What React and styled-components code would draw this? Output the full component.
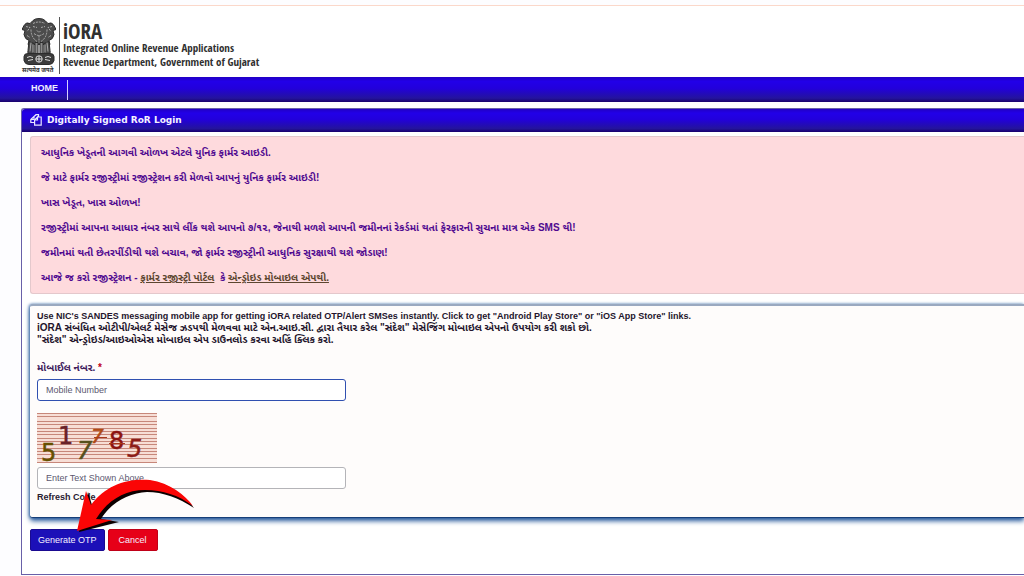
import React from "react";
import styled, { createGlobalStyle, css } from "styled-components";

const GlobalStyle = createGlobalStyle`
  * {
    box-sizing: border-box;
  }

  body {
    margin: 0;
    background: #fdfdff;
    font-family: "Liberation Sans", "Noto Sans Gujarati", "Noto Sans", sans-serif;
    overflow-x: hidden;
  }
`;

const notices = [
  "આધુનિક ખેડૂતની આગવી ઓળખ એટલે યુનિક ફાર્મર આઇડી.",
  "જે માટે ફાર્મર રજીસ્ટ્રીમાં રજીસ્ટ્રેશન કરી મેળવો આપનું યુનિક ફાર્મર આઇડી!",
  "ખાસ ખેડૂત, ખાસ ઓળખ!",
  "રજીસ્ટ્રીમાં આપના આધાર નંબર સાથે લીંક થશે આપનો ૭/૧૨, જેનાથી મળશે આપની જમીનનાં રેકર્ડમાં થતાં ફેરફારની સુચના માત્ર એક SMS થી!",
  "જમીનમાં થતી છેતરપીંડીથી થશે બચાવ, જો ફાર્મર રજીસ્ટ્રીની આધુનિક સુરક્ષાથી થશે જોડાણ!",
];

const captchaLines = [1, 4, 9, 12, 16, 19, 22, 26, 29, 32, 36, 39, 42, 46, 50];

function Emblem() {
  return (
    <EmblemSvg viewBox="0 0 34 48" aria-hidden="true">
      <g fill="#4c4c4c" stroke="#2c2c2c" strokeWidth="1">
        <path d="M11 3 Q13 1 17 1 Q21 1 23 3 L26 6 Q30 4 32 8 L34 12 L31 13 L32 17 Q31 22 27 23 L28 27 L6 27 L7 23 Q3 22 2 17 L3 13 L0 12 L2 8 Q4 4 8 6Z" />
        <path d="M7 24 L6 33 Q5 37 9 37 H12 L12 26Z M27 24 L28 33 Q29 37 25 37 H22 L22 26Z" />
        <path d="M13 25 L13 37 L16 37 L16 25Z M18 25 L18 37 L21 37 L21 25Z" fill="#8c8c8c" />
        <path d="M2 39 Q2 36 6 36 H28 Q32 36 32 39 V43 Q31 47 27 47 H7 Q3 47 2 43Z" fill="#3c3c3c" />
      </g>
      <g fill="none" stroke="#c4c4c4" strokeWidth="0.8">
        <path
          d="M11 6 Q17 3 23 6 M11 9 L15 10 M19 10 L23 9 M15 13 L17 15 L19 13 M12 16 Q17 20 22 16 M9 12 Q9 20 15 24 M25 12 Q25 20 19 24 M17 18 V25 M4 9 L8 10 L5 14 M30 9 L26 10 L29 14 M5 18 L8 20 M29 18 L26 20"
          strokeDasharray="2 1"
        />
        <path d="M9 25 L8 34 M11 27 L11 35 M25 25 L26 34 M23 27 L23 35" />
      </g>
      <g fill="none" stroke="#dcdcdc" strokeWidth="1">
        <circle cx="17" cy="41.5" r="3.2" />
        <path d="M14 41.5 H20 M17 38.5 V44.5 M5 40 Q8 38 11 40 M6 43 L11 42 M23 40 Q26 38 29 40 M23 42 L28 43" />
      </g>
    </EmblemSvg>
  );
}

function Captcha() {
  return (
    <CaptchaSvg viewBox="0 0 120 50" role="img" aria-label="Captcha">
      <rect width="120" height="50" fill="#f7ded6" />
      {captchaLines.map((y) => (
        <path key={y} d={`M0 ${y - 0.5}H120`} stroke="#b86a5c" strokeWidth="1" opacity="0.75" />
      ))}
      <g fontFamily="DejaVu Sans, sans-serif" strokeWidth="0.5">
        <text x="4" y="48" fill="#665000" stroke="#665000" fontSize="24">5</text>
        <text x="21" y="31" fill="#682228" stroke="#682228" fontSize="24">1</text>
        <text x="40" y="46" fill="#56501c" stroke="#56501c" fontSize="24" fontStyle="italic">7</text>
        <text x="54" y="30" fill="#b04a14" stroke="#b04a14" fontSize="20" fontStyle="italic">7</text>
        <text x="72" y="36" fill="#8c1410" stroke="#8c1410" fontSize="24">8</text>
        <text x="90" y="44" fill="#8c1c18" stroke="#8c1c18" fontSize="24" fontStyle="italic">5</text>
      </g>
      <path d="M57 24.5H70 M72 30.5H88" stroke="#a8381c" strokeWidth="1" />
    </CaptchaSvg>
  );
}

function Arrow() {
  return (
    <ArrowSvg viewBox="0 0 118 56" aria-hidden="true">
      <path
        d="M2 54 L11 14 L15 27 C30 8 52 1 74 3 C94 6 108 18 117 30 C102 20 86 14 70 14 C53 15 34 24 24 41 L42 44 Z"
        fill="#0c0000"
      />
      <path
        d="M0 53 L9 13 L14 27 C29 7 50 0 73 2 C93 5 108 17 116 28 C101 17 86 12 68 12 C47 12 30 23 19 41 L35 42 Z"
        fill="#fb0505"
      />
    </ArrowSvg>
  );
}

function App() {
  return (
    <Page>
      <GlobalStyle />
      <Header>
        <EmblemBox>
          <Emblem />
          <Motto>सत्यमेव जयते</Motto>
        </EmblemBox>
        <Brand>
          <BrandName>iORA</BrandName>
          <BrandLine>Integrated Online Revenue Applications</BrandLine>
          <BrandLine>Revenue Department, Government of Gujarat</BrandLine>
        </Brand>
      </Header>
      <Nav>
        <NavLink href="#home">HOME</NavLink>
      </Nav>
      <Panel>
        <PanelHeader>
          <svg width="12" height="12" viewBox="0 0 12 12" fill="none" stroke="#e8e8ff" strokeWidth="1.2" aria-hidden="true">
            <path d="M4 2.5 L6 .7 H8.5 V3 M4 2.5 L.8 5.5 V8.5 H4 M4 2.5 V5.5 H1" />
            <path d="M7.5 3 H11.2 V11.2 H4.6 V6 L7.5 3 V6 H4.8" />
          </svg>
          <PanelTitle>Digitally Signed RoR Login</PanelTitle>
        </PanelHeader>
        <PanelBody>
          <Alert>
            {notices.map((text) => (
              <Notice key={text}>{text}</Notice>
            ))}
            <Notice>
              આજે જ કરો રજીસ્ટ્રેશન - <NoticeLink href="#portal">ફાર્મર રજીસ્ટ્રી પોર્ટલ</NoticeLink>
              {" \u00a0કે "}
              <NoticeLink href="#app">એન્ડ્રોઇડ મોબાઇલ એપથી.</NoticeLink>
            </Notice>
          </Alert>
          <LoginForm id="login" onSubmit={(e) => e.preventDefault()}>
            <Hint>
              <HintLine>
                Use NIC's SANDES messaging mobile app for getting iORA related OTP/Alert SMSes instantly. Click to get
                "Android Play Store" or "iOS App Store" links.
              </HintLine>
              <HintLine $gujarati>
                iORA સંબંધિત ઓટીપી/એલર્ટ મેસેજ ઝડપથી મેળવવા માટે એન.આઇ.સી. દ્વારા તૈયાર કરેલ "સંદેશ" મેસેજિંગ મોબાઇલ
                એપનો ઉપયોગ કરી શકો છો.
              </HintLine>
              <HintLine $gujarati>"સંદેશ" એન્ડ્રોઇડ/આઇઓએસ મોબાઇલ એપ ડાઉનલોડ કરવા અહિં ક્લિક કરો.</HintLine>
            </Hint>
            <Label htmlFor="mobile">
              મોબાઈલ નંબર. <Required>*</Required>
            </Label>
            <Input id="mobile" type="tel" placeholder="Mobile Number" $active />
            <Captcha />
            <Input type="text" placeholder="Enter Text Shown Above" aria-label="Enter Text Shown Above" />
            <RefreshLink href="#refresh">Refresh Code</RefreshLink>
          </LoginForm>
          <Actions>
            <Button type="submit" form="login">
              Generate OTP
            </Button>
            <Button type="button" $danger>
              Cancel
            </Button>
            <Arrow />
          </Actions>
        </PanelBody>
      </Panel>
    </Page>
  );
}

const barGradient = css`
  background: linear-gradient(#2200c4 0%, #2200e8 18%, #2200dc 45%, #24149c 85%, #18006c 100%);
`;

const Page = styled.div`
  margin-top: 5px;
  border-top: 1px solid #fbd8ca;
`;

const Header = styled.header`
  display: flex;
  height: 71px;
  padding: 11px 0 0 22px;
  background: #fff;
`;

const EmblemBox = styled.div`
  display: flex;
  flex-direction: column;
  align-items: flex-start;
  width: 38px;
  height: 57px;
  border-right: 1px solid #555;
`;

const EmblemSvg = styled.svg`
  width: 34px;
  height: 49px;
  flex: none;
`;

const Motto = styled.span`
  font-family: "Noto Sans Devanagari", "Noto Sans", sans-serif;
  font-size: 6px;
  font-weight: 700;
  line-height: 10px;
  color: #333;
  white-space: nowrap;
`;

const Brand = styled.div`
  padding: 5px 0 0 3px;
  font-family: "Open Sans Condensed", "Liberation Sans Narrow", "Open Sans", sans-serif;
  color: #303030;
`;

const BrandName = styled.div`
  font-size: 21px;
  font-weight: 700;
  line-height: 19px;
`;

const BrandLine = styled.div`
  font-size: 11px;
  font-weight: 600;
  line-height: 14px;
  white-space: nowrap;
`;

const Nav = styled.nav`
  display: flex;
  height: 25px;
  padding: 3px 0 2px 31px;
  ${barGradient}
`;

const NavLink = styled.a`
  padding-right: 9px;
  border-right: 1px solid #d5d0ff;
  color: #f0eeff;
  font-size: 9px;
  font-weight: 700;
  line-height: 17px;
  text-decoration: none;
`;

const Panel = styled.main`
  margin: 6px 0 0 21px;
  border: 1px solid #6860a8;
  border-right: 0;
  border-radius: 3px 0 0 0;
  background: #fff;
`;

const PanelHeader = styled.div`
  display: flex;
  align-items: center;
  gap: 5px;
  height: 23px;
  padding: 0 8px 2px;
  border-radius: 3px 0 0 0;
  ${barGradient}
`;

const PanelTitle = styled.h1`
  margin: 0;
  color: #f4f2ff;
  font-family: "DejaVu Sans", sans-serif;
  font-size: 9px;
  font-weight: 700;
`;

const PanelBody = styled.div`
  padding: 4px 0 23px 8px;
`;

const Alert = styled.section`
  padding: 3px 10px;
  border: 1px solid #e4c8cc;
  border-right: 0;
  border-radius: 3px 0 0 3px;
  background: #fedadd;
`;

const Notice = styled.p`
  margin: 0;
  color: #500a90;
  font-size: 10px;
  font-weight: 700;
  line-height: 25px;
  white-space: nowrap;
`;

const NoticeLink = styled.a`
  color: #5c4630;
  text-decoration: underline;
`;

const LoginForm = styled.form`
  display: flex;
  flex-direction: column;
  align-items: flex-start;
  margin-top: 10px;
  padding: 4px 7px 14px;
  background: #fefcfb;
  border-top: 2px solid #9aa9c0;
  border-bottom: 1px solid #173e78;
  border-radius: 3px 0 0 3px;
  box-shadow: 0 3px 5px #285a9c, -1px 0 3px #5a82b4;
`;

const Hint = styled.div`
  margin-bottom: 15px;
`;

const HintLine = styled.p`
  margin: 0;
  color: #24152c;
  font-size: ${(p) => (p.$gujarati ? 10 : 9)}px;
  font-weight: 700;
  line-height: 12px;
  white-space: nowrap;
`;

const Label = styled.label`
  margin-bottom: 4px;
  color: #40205c;
  font-size: 10px;
  font-weight: 700;
  line-height: 14px;
`;

const Required = styled.span`
  color: #c00020;
`;

const Input = styled.input`
  width: 309px;
  max-width: 100%;
  height: 22px;
  padding: 0 8px;
  border: 1px solid ${(p) => (p.$active ? "#3050b0" : "#b4b4b8")};
  border-radius: 3px;
  background: #fff;
  font-family: "Liberation Sans", sans-serif;
  font-size: 9px;

  &::placeholder {
    color: #5c5870;
    opacity: 1;
  }
`;

const CaptchaSvg = styled.svg`
  width: 120px;
  height: 50px;
  margin: 12px 0 4px;
`;

const RefreshLink = styled.a`
  margin-top: 2px;
  color: #2a2030;
  font-size: 9px;
  font-weight: 700;
  line-height: 12px;
  text-decoration: none;
`;

const Actions = styled.div`
  position: relative;
  display: flex;
  gap: 3px;
  margin-top: 11px;
`;

const Button = styled.button`
  height: 22px;
  padding: 0 ${(p) => (p.$danger ? 10 : 7)}px;
  border: 1px solid ${(p) => (p.$danger ? "#c00018" : "#1a0a90")};
  border-radius: 2px;
  background: ${(p) => (p.$danger ? "#e60018" : "#1c10b8")};
  color: #f4f0ff;
  font-family: "Liberation Sans", sans-serif;
  font-size: 9px;
`;

const ArrowSvg = styled.svg`
  position: absolute;
  left: 47px;
  top: -51px;
  width: 118px;
  height: 56px;
  pointer-events: none;
`;

export default App;
